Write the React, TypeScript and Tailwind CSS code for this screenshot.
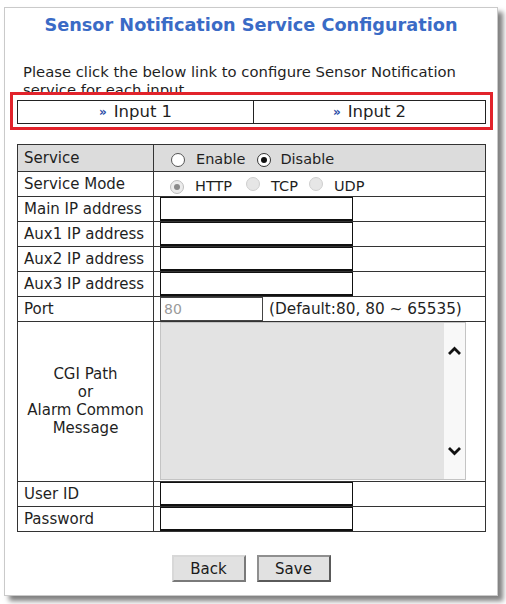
import React from "react";

function Radio({ kind }: { kind: "off" | "on" | "disOn" | "disOff" }) {
  if (kind === "off")
    return <span className="inline-block w-[14px] h-[14px] rounded-full border border-[#555] bg-white shrink-0" />;
  if (kind === "on")
    return (
      <span className="w-[14px] h-[14px] rounded-full border border-[#333] bg-white shrink-0 flex items-center justify-center">
        <span className="w-[6px] h-[6px] rounded-full bg-[#111]" />
      </span>
    );
  if (kind === "disOn")
    return (
      <span className="w-[14px] h-[14px] rounded-full border border-[#bdbdbd] bg-[#ececec] shrink-0 flex items-center justify-center">
        <span className="w-[6px] h-[6px] rounded-full bg-[#8a8a8a]" />
      </span>
    );
  return <span className="inline-block w-[14px] h-[14px] rounded-full border border-[#cfcfcf] bg-[#e6e6e6] shrink-0" />;
}

function InputRow({ label, last }: { label: string; last?: boolean }) {
  return (
    <div className={`flex ${last ? "h-[24px]" : "h-[25px] border-b border-[#333]"}`}>
      <div className="w-[136px] border-r border-[#333] pl-[6px] flex items-center leading-[18px]">{label}</div>
      <div className="flex-1 flex items-start">
        <div className="ml-[6px] w-[193px] h-[24px] border border-[#111] border-b-2 bg-white" />
      </div>
    </div>
  );
}

export default function App() {
  return (
    <div className="w-[506px] h-[604px] bg-white font-['DejaVu_Sans',sans-serif] text-[15px] text-[#1f1f1f] pt-[7px] pl-[4px]">
      <div className="w-[494px] h-[589px] border border-[#cacaca] bg-white shadow-[5px_5px_5px_rgba(0,0,0,0.5)] flex flex-col">
        <div className="mt-[7px] h-[21px] leading-[21px] text-center font-bold text-[17.7px] text-[#3a6bc6]">
          Sensor Notification Service Configuration
        </div>
        <div className="mt-[27px] h-[29px] overflow-hidden pl-[18px] pr-[14px] leading-[18px] text-[14.8px]">
          Please click the below link to configure Sensor Notification service for each input
        </div>
        <div className="ml-[5px] w-[483px] border-[3px] border-[#e2232b] pt-[5px] pb-[3px] pl-[4px]">
          <div className="w-[469px] h-[24px] border border-[#222] flex text-[16.5px]">
            <div className="w-[236px] border-r border-[#222] flex items-center justify-center leading-[20px]">
              <span className="text-[12px] font-bold text-[#2a4ca6] mr-[7px]">»</span>
              <span>Input 1</span>
            </div>
            <div className="flex-1 flex items-center justify-center leading-[20px]">
              <span className="text-[12px] font-bold text-[#2a4ca6] mr-[7px]">»</span>
              <span>Input 2</span>
            </div>
          </div>
        </div>

        <div className="mt-[14px] ml-[12px] w-[469px] border border-[#333] flex flex-col">
          <div className="flex h-[27px] border-b border-[#333] bg-[#dcdcdc]">
            <div className="w-[136px] border-r border-[#333] pl-[6px] flex items-center leading-[18px]">Service</div>
            <div className="flex-1 flex items-center pt-[4px] pl-[17px] text-[14.5px]">
              <Radio kind="off" />
              <span className="ml-[11px]">Enable</span>
              <span className="ml-[12px]"><Radio kind="on" /></span>
              <span className="ml-[9px]">Disable</span>
            </div>
          </div>
          <div className="flex h-[25px] border-b border-[#333]">
            <div className="w-[136px] border-r border-[#333] pl-[6px] flex items-center leading-[18px]">Service Mode</div>
            <div className="flex-1 flex items-center pt-[5px] pl-[16px] text-[14.5px]">
              <Radio kind="disOn" />
              <span className="ml-[11px]">HTTP</span>
              <span className="ml-[14px]"><Radio kind="disOff" /></span>
              <span className="ml-[11px]">TCP</span>
              <span className="ml-[11px]"><Radio kind="disOff" /></span>
              <span className="ml-[11px]">UDP</span>
            </div>
          </div>
          <InputRow label="Main IP address" />
          <InputRow label="Aux1 IP address" />
          <InputRow label="Aux2 IP address" />
          <InputRow label="Aux3 IP address" />
          <div className="flex h-[25px] border-b border-[#333]">
            <div className="w-[136px] border-r border-[#333] pl-[6px] flex items-center leading-[18px]">Port</div>
            <div className="flex-1 flex items-start">
              <div className="ml-[6px] w-[103px] h-[24px] border border-[#444] bg-white text-[#9a9a9a] pl-[3px] leading-[22px] text-[14px]">80</div>
              <span className="ml-[6px] leading-[24px] text-[15.3px]">(Default:80, 80 ~ 65535)</span>
            </div>
          </div>
          <div className="flex h-[160px] border-b border-[#333]">
            <div className="w-[136px] border-r border-[#333] flex flex-col items-center justify-center leading-[18px] text-center pb-[1px]">
              <span>CGI Path</span>
              <span>or</span>
              <span>Alarm Common</span>
              <span>Message</span>
            </div>
            <div className="flex-1 flex items-start">
              <div className="ml-[6px] w-[306px] h-[158px] border border-[#c4c4c4] flex">
                <div className="flex-1 bg-[#e3e3e3]" />
                <div className="w-[21px] bg-[#f8f8f8] flex flex-col items-center justify-between pt-[23px] pb-[23px]">
                  <svg width="15" height="10" viewBox="0 0 15 10">
                    <path d="M2 8 L7.5 2.5 L13 8" fill="none" stroke="#111" strokeWidth="2.8" />
                  </svg>
                  <svg width="15" height="10" viewBox="0 0 15 10">
                    <path d="M2 2 L7.5 7.5 L13 2" fill="none" stroke="#111" strokeWidth="2.8" />
                  </svg>
                </div>
              </div>
            </div>
          </div>
          <InputRow label="User ID" />
          <InputRow label="Password" last />
        </div>

        <div className="mt-[23px] flex justify-center gap-[11px]">
          <button className="w-[74px] h-[27px] bg-[#e1e1e1] border-2 border-t-[#d8d8d8] border-l-[#d8d8d8] border-r-[#7a7a7a] border-b-[#7a7a7a] text-[15px] text-[#1a1a1a] leading-[20px]">
            Back
          </button>
          <button className="w-[74px] h-[27px] bg-[#e1e1e1] border-2 border-t-[#8f8f8f] border-l-[#8f8f8f] border-r-[#5a5a5a] border-b-[#5a5a5a] text-[15px] text-[#1a1a1a] leading-[20px]">
            Save
          </button>
        </div>
      </div>
    </div>
  );
}
